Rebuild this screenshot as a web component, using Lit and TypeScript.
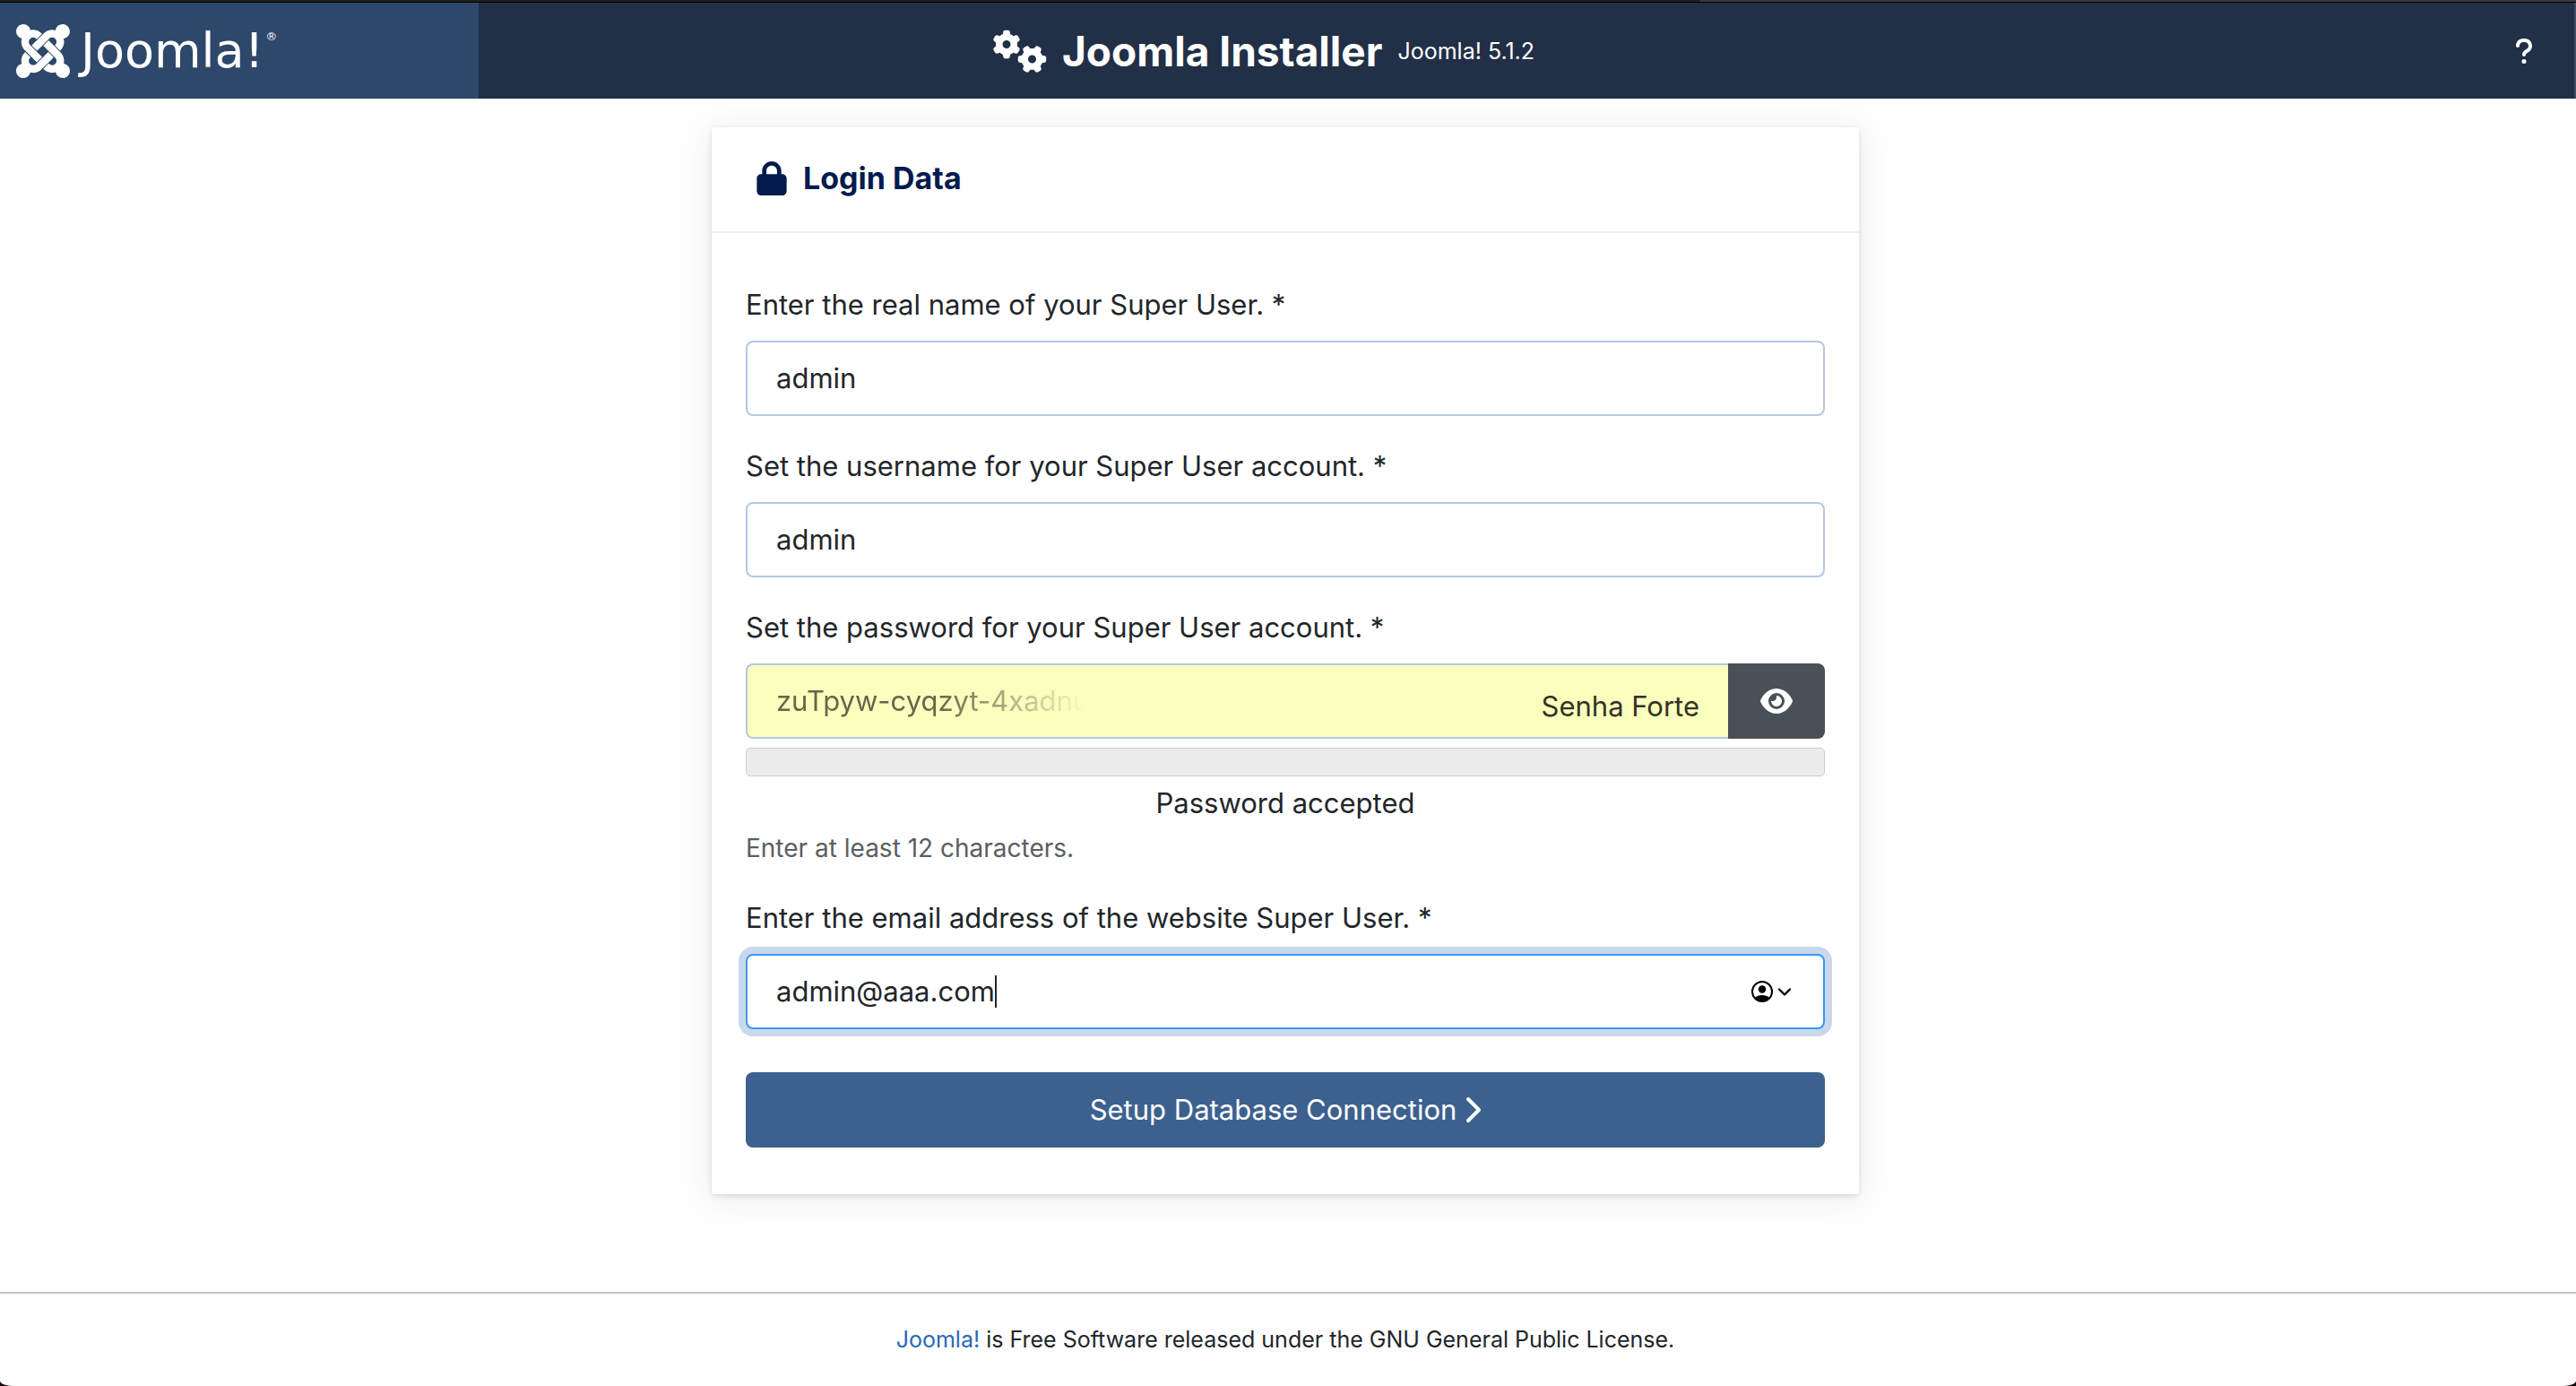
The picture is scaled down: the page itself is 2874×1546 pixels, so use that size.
import { LitElement, html, css, svg } from "lit";
import { customElement, state } from "lit/decorators.js";

const joomlaMark = svg`<path d="M.6 92.1C.6 58.8 27.4 32 60.4 32c30 0 54.5 21.9 59.2 50.2 32.6-7.6 67.1.6 96.5 30l-44.3 44.3c-20.5-20.5-42.6-16.3-55.4-3.5-14.3 14.3-14.3 37.9 0 52.2l99.5 99.5-44 44.3c-87.7-87.2-49.7-49.7-99.8-99.7-26.8-26.5-35-64.8-24.8-98.9C20.4 144.6.6 120.7.6 92.1zm129.5 116.4l44.3 44.3c10-10 89.7-89.7 99.7-99.8 14.3-14.3 37.6-14.3 51.9 0 12.8 12.8 17 35-3.5 55.4l44 44.3c31.2-31.2 38.5-67.6 28.9-101.2 29.2-4.1 51.9-29.2 51.9-59.5 0-33.2-26.8-60.1-59.8-60.1-30.3 0-55.4 22.5-59.5 51.6-33.8-9.9-71.7-1.5-98.3 25.1-18.3 19.1-71.1 71.5-99.6 99.9zm266.3 152.2c8.2-32.7-.9-68.5-26.3-93.9-11.8-12.2 5 4.7-99.5-99.7l-44.3 44.3 99.7 99.7c14.3 14.3 14.3 37.6 0 51.9-12.8 12.8-35 17-55.4-3.5l-44 44.3c27.6 30.2 68 38.8 102.7 28 5.5 27.4 29.7 48.1 58.9 48.1 33 0 59.8-26.8 59.8-60.1 0-30.2-22.5-55-51.6-59.1zm-84.3-53.1l-44-44.3c-87 86.4-50.4 50.4-99.7 99.8-14.3 14.3-37.6 14.3-51.9 0-13.1-13.4-16.9-35.3 3.2-55.4l-44-44.3c-30.2 30.2-38 65.2-29.5 98.3-26.7 6-46.2 29.9-46.2 58.2C0 453.2 26.8 480 59.8 480c28.6 0 52.5-19.8 58.6-46.7 32.7 8.2 68.5-.6 94.2-26 32.1-32 12.2-12.4 99.5-99.7z"/>`;

const gears = svg`<path d="M308.5 135.3c7.1-6.3 9.9-16.2 6.2-25c-2.3-5.3-4.8-10.5-7.6-15.5L304 89.4c-3-5-6.3-9.9-9.8-14.6c-5.7-7.6-15.7-10.1-24.7-7.1l-28.2 9.3c-10.7-8.8-23-16-36.2-20.9L199 27.1c-1.9-9.3-9.1-16.7-18.5-17.8C173.9 8.4 167.2 8 160.4 8h-.7c-6.8 0-13.5 .4-20.1 1.2c-9.4 1.1-16.6 8.6-18.5 17.8L115 56.1c-13.3 5-25.5 12.1-36.2 20.9L50.5 67.8c-9-3-19-.5-24.7 7.1c-3.5 4.7-6.8 9.6-9.9 14.6l-3 5.3c-2.8 5-5.3 10.2-7.6 15.6c-3.7 8.7-.9 18.6 6.2 25l22.2 19.8C32.6 161.9 32 168.9 32 176s.6 14.1 1.7 20.9L11.5 216.7c-7.1 6.3-9.9 16.2-6.2 25c2.3 5.3 4.8 10.5 7.6 15.6l3 5.2c3 5.1 6.3 9.9 9.9 14.6c5.7 7.6 15.7 10.1 24.7 7.1l28.2-9.3c10.7 8.8 23 16 36.2 20.9l6.1 29.1c1.9 9.3 9.1 16.7 18.5 17.8c6.7 .8 13.5 1.2 20.4 1.2s13.7-.4 20.4-1.2c9.4-1.1 16.6-8.6 18.5-17.8l6.1-29.1c13.3-5 25.5-12.1 36.2-20.9l28.2 9.3c9 3 19 .5 24.7-7.1c3.5-4.7 6.8-9.5 9.8-14.6l3.1-5.4c2.8-5 5.3-10.2 7.6-15.5c3.7-8.7 .9-18.6-6.2-25l-22.2-19.8c1.1-6.8 1.7-13.8 1.7-20.9s-.6-14.1-1.7-20.9l22.2-19.8zM112 176a48 48 0 1 1 96 0 48 48 0 1 1 -96 0zM504.7 500.5c6.3 7.1 16.2 9.9 25 6.2c5.3-2.3 10.5-4.8 15.5-7.6l5.4-3.1c5-3 9.9-6.3 14.6-9.8c7.6-5.7 10.1-15.7 7.1-24.7l-9.3-28.2c8.8-10.7 16-23 20.9-36.2l29.1-6.1c9.3-1.9 16.7-9.1 17.8-18.5c.8-6.7 1.2-13.5 1.2-20.4s-.4-13.7-1.2-20.4c-1.1-9.4-8.6-16.6-17.8-18.5L583.9 307c-5-13.3-12.1-25.5-20.9-36.2l9.3-28.2c3-9 .5-19-7.1-24.7c-4.7-3.5-9.6-6.8-14.6-9.9l-5.3-3c-5-2.8-10.2-5.3-15.6-7.6c-8.7-3.7-18.6-.9-25 6.2l-19.8 22.2c-6.8-1.1-13.8-1.7-20.9-1.7s-14.1 .6-20.9 1.7l-19.8-22.2c-6.3-7.1-16.2-9.9-25-6.2c-5.3 2.3-10.5 4.8-15.6 7.6l-5.2 3c-5.1 3-9.9 6.3-14.6 9.9c-7.6 5.7-10.1 15.7-7.1 24.7l9.3 28.2c-8.8 10.7-16 23-20.9 36.2L315.1 313c-9.3 1.9-16.7 9.1-17.8 18.5c-.8 6.7-1.2 13.5-1.2 20.4s.4 13.7 1.2 20.4c1.1 9.4 8.6 16.6 17.8 18.5l29.1 6.1c5 13.3 12.1 25.5 20.9 36.2l-9.3 28.2c-3 9-.5 19 7.1 24.7c4.7 3.5 9.5 6.8 14.6 9.8l5.4 3.1c5 2.8 10.2 5.3 15.5 7.6c8.7 3.7 18.6 .9 25-6.2l19.8-22.2c6.8 1.1 13.8 1.7 20.9 1.7s14.1-.6 20.9-1.7l19.8 22.2zM464 304a48 48 0 1 1 0 96 48 48 0 1 1 0-96z"/>`;

const lock = svg`<path d="M144 144v48H304V144c0-44.2-35.8-80-80-80s-80 35.8-80 80zM80 192V144C80 64.5 144.5 0 224 0s144 64.5 144 144v48h16c35.3 0 64 28.7 64 64V448c0 35.3-28.7 64-64 64H64c-35.3 0-64-28.7-64-64V256c0-35.3 28.7-64 64-64H80z"/>`;

const eye = svg`<path d="M288 32c-80.8 0-145.5 36.8-192.6 80.6C48.6 156 17.3 208 2.5 243.7c-3.3 7.9-3.3 16.7 0 24.6C17.3 304 48.6 356 95.4 399.4C142.5 443.2 207.2 480 288 480s145.5-36.8 192.6-80.6c46.8-43.5 78.1-95.4 93-131.1c3.3-7.9 3.3-16.7 0-24.6c-14.9-35.7-46.2-87.7-93-131.1C433.5 68.8 368.8 32 288 32zM144 256a144 144 0 1 1 288 0 144 144 0 1 1 -288 0zm144-64c0 35.3-28.7 64-64 64c-7.1 0-13.9-1.2-20.3-3.3c-5.5-1.8-11.9 1.6-11.7 7.4c.3 6.9 1.3 13.8 3.2 20.7c13.7 51.2 66.4 81.6 117.6 67.9s81.6-66.4 67.9-117.6c-11.1-41.5-47.8-69.4-88.6-71.1c-5.8-.2-9.2 6.1-7.4 11.7c2.1 6.4 3.3 13.2 3.3 20.3z"/>`;

const chevronRight = svg`<path d="M310.6 233.4c12.5 12.5 12.5 32.8 0 45.3l-192 192c-12.5 12.5-32.8 12.5-45.3 0s-12.5-32.8 0-45.3L242.7 256 73.4 86.6c-12.5-12.5-12.5-32.8 0-45.3s32.8-12.5 45.3 0l192 192z"/>`;

const question = svg`<path d="M80 160c0-35.3 28.7-64 64-64h32c35.3 0 64 28.7 64 64v3.6c0 21.8-11.1 42.1-29.4 53.8l-42.2 27.1c-25.2 16.2-40.4 44.1-40.4 74V320c0 17.7 14.3 32 32 32s32-14.3 32-32v-1.4c0-8.2 4.2-15.8 11-20.2l42.2-27.1c36.6-23.6 58.8-64.1 58.8-107.7V160c0-70.7-57.3-128-128-128H144C73.3 32 16 89.3 16 160c0 17.7 14.3 32 32 32s32-14.3 32-32zm80 320a40 40 0 1 0 0-80 40 40 0 1 0 0 80z"/>`;

@customElement("app-root")
export class AppRoot extends LitElement {
  static styles = css`
    :host {
      display: block;
      background: #12060c;
      font-family: Inter, "Liberation Sans", sans-serif;
      font-size: 31px;
      line-height: 48px;
      color: #22262a;
    }
    * {
      box-sizing: border-box;
    }
    svg {
      display: block;
      fill: currentColor;
      flex: none;
    }
    .page {
      display: flex;
      flex-direction: column;
      min-height: 100vh;
      background: #fefefe;
      border-radius: 0 0 14px 14px / 0 0 6px 6px;
      overflow: hidden;
    }
    .frame {
      height: 3px;
      border-bottom: 1px solid #000;
      background: linear-gradient(90deg, #1f1f22 66%, #3a3a3d 66%);
    }
    .header {
      display: grid;
      grid-template-columns: 1fr auto 1fr;
      align-items: center;
      padding-right: 46px;
      border-right: 2px solid #3f4c61;
      background: #212f47;
      color: #fff;
    }
    .brand {
      display: flex;
      align-items: center;
      width: 534px;
      height: 107px;
      padding-left: 18px;
      gap: 12px;
      background: #2e486b;
      color: #fff;
      text-decoration: none;
    }
    .wordmark {
      display: flex;
      gap: 2px;
      font-family: "DejaVu Sans", sans-serif;
      font-size: 54px;
      line-height: 56px;
    }
    .reg {
      font-size: 13px;
      line-height: 24px;
    }
    .title {
      display: flex;
      align-items: center;
      gap: 17px;
      padding-right: 6px;
    }
    h1 {
      margin: 0;
      font-size: 46px;
      line-height: 60px;
      font-weight: 700;
    }
    .version {
      font-size: 25px;
    }
    .help {
      justify-self: end;
      padding: 0;
      border: 0;
      background: none;
      color: #fff;
    }
    .main {
      display: flex;
      justify-content: center;
      padding: 32px 6px 80px 0;
    }
    .card {
      width: 100%;
      max-width: 1280px;
      background: #fff;
      box-shadow: 0 4px 32px rgba(20, 50, 40, 0.09), 0 2px 6px rgba(0, 0, 0, 0.12);
    }
    .card-head {
      display: flex;
      align-items: center;
      gap: 18px;
      padding: 32px 50px 34px;
      border-bottom: 2px solid #eee;
      color: #021b4d;
    }
    h2 {
      margin: 0;
      font-size: 34px;
      line-height: 50px;
      font-weight: 700;
    }
    form {
      display: flex;
      flex-direction: column;
      gap: 32px;
      padding: 56px 38px 52px;
    }
    .group {
      display: flex;
      flex-direction: column;
    }
    label {
      margin-bottom: 16px;
    }
    input {
      min-width: 0;
      padding: 0;
      border: 0;
      outline: 0;
      background: none;
      color: inherit;
      font: inherit;
    }
    .box {
      display: flex;
      align-items: center;
      height: 84px;
      padding: 0 32px;
      border: 2px solid #b6c8e1;
      border-radius: 8px;
      background: #fff;
    }
    .box .wide {
      flex: 1;
    }
    .row {
      display: flex;
    }
    .strong {
      flex: 1;
      border-right: 0;
      border-radius: 8px 0 0 8px;
      background: #faffbd;
    }
    .secret {
      flex: 1;
      color: #65664b;
      -webkit-mask-image: linear-gradient(90deg, #000 180px, transparent 345px);
      mask-image: linear-gradient(90deg, #000 180px, transparent 345px);
    }
    .strength {
      padding-top: 12px;
      color: #323326;
    }
    .reveal {
      display: flex;
      align-items: center;
      justify-content: center;
      width: 108px;
      padding: 0;
      border: 0;
      border-radius: 0 8px 8px 0;
      background: #495057;
      color: #fff;
    }
    .meter {
      height: 32px;
      margin: 10px 0 6px;
      border: 1px solid #ccc;
      border-radius: 5px;
      background: #ececec;
    }
    .status {
      text-align: center;
    }
    .hint {
      margin-top: 4px;
      font-size: 28px;
      line-height: 44px;
      color: #5b5e61;
    }
    .focused {
      border-color: #3898fb;
      box-shadow: 0 0 0 8px #c9d9eb;
    }
    .email {
      field-sizing: content;
      caret-color: transparent;
    }
    .caret {
      width: 2px;
      height: 36px;
      background: #22262a;
    }
    .autofill {
      display: flex;
      align-items: center;
      gap: 4px;
      margin-left: auto;
      padding: 0 2px 0 0;
      border: 0;
      background: none;
      color: #000;
    }
    .submit {
      display: flex;
      align-items: center;
      justify-content: center;
      gap: 7px;
      height: 84px;
      margin-top: 16px;
      border: 0;
      border-radius: 8px;
      background: #3d618f;
      color: #fff;
      font: inherit;
    }
    .footer {
      margin-top: auto;
      padding: 33px 6px 34px 0;
      border-top: 2px solid #c4c4c4;
      text-align: center;
      font-size: 25px;
      line-height: 36px;
    }
    .footer a {
      color: #2a69b8;
      text-decoration: none;
    }
  `;

  @state() private email = "admin@aaa.com";

  private onEmail(e: Event) {
    this.email = (e.target as HTMLInputElement).value;
  }

  render() {
    return html`
      <div class="page">
        <div class="frame"></div>
        <header class="header">
          <a class="brand" href="#">
            <svg width="60" height="60" viewBox="0 32 448 448">${joomlaMark}</svg>
            <span class="wordmark">Joomla!<span class="reg">®</span></span>
          </a>
          <div class="title">
            <svg width="60" height="48" viewBox="0 0 640 512">${gears}</svg>
            <h1>Joomla Installer</h1>
            <span class="version">Joomla! 5.1.2</span>
          </div>
          <button class="help" type="button" aria-label="Help">
            <svg width="20" height="32" viewBox="0 0 320 512">${question}</svg>
          </button>
        </header>
        <main class="main">
          <section class="card">
            <div class="card-head">
              <svg width="34" height="38" viewBox="0 0 448 512">${lock}</svg>
              <h2>Login Data</h2>
            </div>
            <form @submit=${(e: Event) => e.preventDefault()}>
              <div class="group">
                <label for="name">Enter the real name of your Super User. *</label>
                <div class="box"><input class="wide" id="name" type="text" value="admin" /></div>
              </div>
              <div class="group">
                <label for="user">Set the username for your Super User account. *</label>
                <div class="box"><input class="wide" id="user" type="text" value="admin" /></div>
              </div>
              <div class="group">
                <label for="pass">Set the password for your Super User account. *</label>
                <div class="row">
                  <div class="box strong">
                    <input class="secret" id="pass" type="text" value="zuTpyw-cyqzyt-4xadnu" />
                    <span class="strength">Senha Forte</span>
                  </div>
                  <button class="reveal" type="button" aria-label="Show password">
                    <svg width="36" height="28" viewBox="0 32 576 448">${eye}</svg>
                  </button>
                </div>
                <div class="meter"></div>
                <div class="status">Password accepted</div>
                <div class="hint">Enter at least 12 characters.</div>
              </div>
              <div class="group">
                <label for="email">Enter the email address of the website Super User. *</label>
                <div class="box focused">
                  <input class="email" id="email" type="text" .value=${this.email} @input=${this.onEmail} />
                  <span class="caret"></span>
                  <button class="autofill" type="button" aria-label="Fill in contact">
                    <svg width="24" height="24" viewBox="0 0 24 24">
                      <circle cx="12" cy="12" r="11" fill="none" stroke="currentColor" stroke-width="2" />
                      <circle cx="12" cy="9.5" r="4.2" />
                      <path d="M4 19C6 16.800 9 16 12 16s6 .8 8 3c-2 2.800-5 4-8 4s-6-1.200-8-4z" />
                    </svg>
                    <svg width="18" height="24" viewBox="0 0 18 24">
                      <path d="M3 9.500l6 6 6-6" fill="none" stroke="currentColor" stroke-width="2.400" stroke-linecap="round" stroke-linejoin="round" />
                    </svg>
                  </button>
                </div>
              </div>
              <button class="submit" type="submit">
                Setup Database Connection
                <svg width="20" height="32" viewBox="0 0 320 512">${chevronRight}</svg>
              </button>
            </form>
          </section>
        </main>
        <footer class="footer">
          <a href="#">Joomla!</a> is Free Software released under the GNU General Public License.
        </footer>
      </div>
    `;
  }
}
